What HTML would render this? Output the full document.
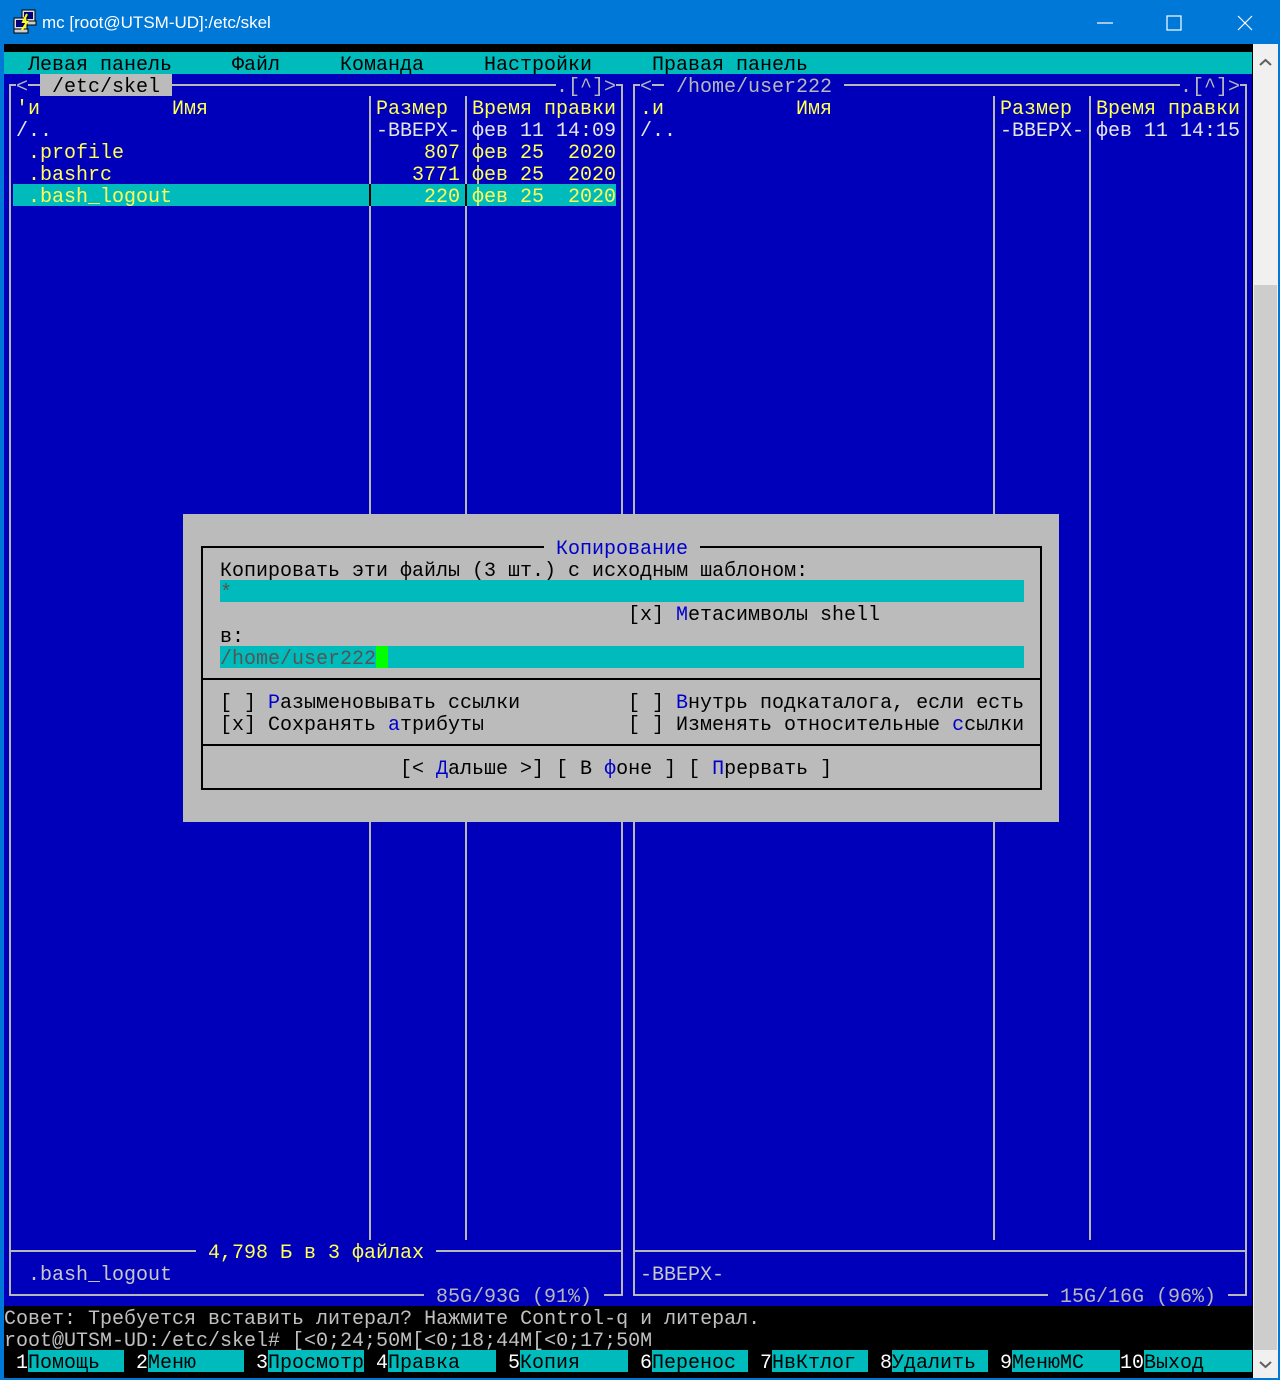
<!DOCTYPE html>
<html><head><meta charset="utf-8"><style>
*{margin:0;padding:0}
body{width:1280px;height:1380px;position:relative;overflow:hidden;background:#000;font-family:"Liberation Mono",monospace;font-size:20px}
.t{position:absolute;height:22px;line-height:27px;white-space:pre;overflow:hidden}
.b{position:absolute}
.hl{position:absolute;height:2px;background:#b8b8b8}
.vl{position:absolute;width:2px;background:#b8b8b8}
.dh{position:absolute;height:2px;background:#000}
.dv{position:absolute;width:2px;background:#000}
.w{color:#e6e6e6}.y{color:#ffff55}.k{color:#000}.bl{color:#0000cc}
</style></head><body>
<div class="b" style="left:0;top:0;width:1280px;height:44px;background:#0078d7"></div>
<div class="b" style="left:0;top:44px;width:4px;height:1336px;background:#0078d7"></div>
<div class="b" style="left:1278px;top:44px;width:2px;height:1336px;background:#0078d7"></div>
<div class="b" style="left:0;top:1378px;width:1280px;height:2px;background:#0078d7"></div>
<svg class="b" style="left:12px;top:9px" width="26" height="26" viewBox="0 0 26 26">
<rect x="10" y="1" width="13" height="11" fill="#ddd" stroke="#000"/><rect x="12" y="3" width="9" height="7" fill="#00007a"/>
<rect x="10" y="12" width="14" height="4" fill="#ccc" stroke="#000"/>
<rect x="2" y="9" width="13" height="11" fill="#ddd" stroke="#000"/><rect x="4" y="11" width="9" height="7" fill="#00007a"/>
<rect x="2" y="20" width="14" height="4" fill="#ccc" stroke="#000"/>
<path d="M15 5 L11 13 L15 13 L10 21" stroke="#ff0" stroke-width="2" fill="none"/></svg>
<div class="b" style="left:42px;top:12px;color:#fff;font-family:'Liberation Sans',sans-serif;font-size:17px;line-height:22px">mc [root@UTSM-UD]:/etc/skel</div>
<svg class="b" style="left:1090px;top:10px" width="170" height="26" viewBox="0 0 170 26">
<path d="M7 13 H23" stroke="#fff" stroke-width="1.2"/>
<rect x="77" y="6" width="14" height="14" fill="none" stroke="#fff" stroke-width="1.2"/>
<path d="M148 6 L162 20 M162 6 L148 20" stroke="#fff" stroke-width="1.2"/></svg>
<div class="b" style="left:1253px;top:44px;width:25px;height:1334px;background:#f0f0f0"></div>
<div class="b" style="left:1254px;top:285px;width:23px;height:1065px;background:#cdcdcd"></div>
<svg class="b" style="left:1253px;top:52px" width="25" height="20"><path d="M7 13 L12.5 8 L18 13" stroke="#606060" stroke-width="2" fill="none"/></svg>
<svg class="b" style="left:1253px;top:1355px" width="25" height="20"><path d="M7 7 L12.5 12 L18 7" stroke="#606060" stroke-width="2" fill="none"/></svg>
<div class="b" style="left:4px;top:52px;width:1248px;height:22px;background:#00bbbb"></div>
<div class="b" style="left:4px;top:74px;width:1248px;height:1232px;background:#0000bb"></div>
<div class="t k" style="left:28px;top:52px">Левая панель</div>
<div class="t k" style="left:232px;top:52px">Файл</div>
<div class="t k" style="left:340px;top:52px">Команда</div>
<div class="t k" style="left:484px;top:52px">Настройки</div>
<div class="t k" style="left:652px;top:52px">Правая панель</div>
<div class="hl" style="left:9px;top:84px;width:614px"></div>
<div class="vl" style="left:9px;top:84px;height:1212px"></div>
<div class="vl" style="left:621px;top:84px;height:1212px"></div>
<div class="hl" style="left:9px;top:1250px;width:614px"></div>
<div class="hl" style="left:9px;top:1294px;width:614px"></div>
<div class="vl" style="left:369px;top:96px;height:1144px"></div>
<div class="vl" style="left:465px;top:96px;height:1144px"></div>
<div class="hl" style="left:633px;top:84px;width:614px"></div>
<div class="vl" style="left:633px;top:84px;height:1212px"></div>
<div class="vl" style="left:1245px;top:84px;height:1212px"></div>
<div class="hl" style="left:633px;top:1250px;width:614px"></div>
<div class="hl" style="left:633px;top:1294px;width:614px"></div>
<div class="vl" style="left:993px;top:96px;height:1144px"></div>
<div class="vl" style="left:1089px;top:96px;height:1144px"></div>
<div class="t" style="left:16px;top:74px;background:#0000bb;color:#b8b8b8">&lt;</div>
<div class="t k" style="left:40px;top:74px;background:#bbbbbb"> /etc/skel </div>
<div class="t" style="left:556px;top:74px;background:#0000bb;color:#b8b8b8">.[^]&gt;</div>
<div class="t" style="left:640px;top:74px;background:#0000bb;color:#b8b8b8">&lt;</div>
<div class="t" style="left:664px;top:74px;background:#0000bb;color:#b8b8b8"> /home/user222 </div>
<div class="t" style="left:1180px;top:74px;background:#0000bb;color:#b8b8b8">.[^]&gt;</div>
<div class="t y" style="left:16px;top:96px">'и</div>
<div class="t y" style="left:172px;top:96px">Имя</div>
<div class="t y" style="left:376px;top:96px">Размер</div>
<div class="t y" style="left:472px;top:96px">Время правки</div>
<div class="t y" style="left:640px;top:96px">.и</div>
<div class="t y" style="left:796px;top:96px">Имя</div>
<div class="t y" style="left:1000px;top:96px">Размер</div>
<div class="t y" style="left:1096px;top:96px">Время правки</div>
<div class="t w" style="left:16px;top:118px">/..</div>
<div class="t w" style="left:376px;top:118px">-ВВЕРХ-</div>
<div class="t w" style="left:472px;top:118px">фев 11 14:09</div>
<div class="t y" style="left:28px;top:140px">.profile</div>
<div class="t y" style="left:424px;top:140px">807</div>
<div class="t y" style="left:472px;top:140px">фев 25  2020</div>
<div class="t y" style="left:28px;top:162px">.bashrc</div>
<div class="t y" style="left:412px;top:162px">3771</div>
<div class="t y" style="left:472px;top:162px">фев 25  2020</div>
<div class="b" style="left:13px;top:184px;width:603px;height:22px;background:#00bbbb"></div>
<div class="b" style="left:369px;top:184px;width:2px;height:22px;background:#000"></div>
<div class="b" style="left:465px;top:184px;width:2px;height:22px;background:#000"></div>
<div class="t y" style="left:28px;top:184px">.bash_logout</div>
<div class="t y" style="left:424px;top:184px">220</div>
<div class="t y" style="left:472px;top:184px">фев 25  2020</div>
<div class="t w" style="left:640px;top:118px">/..</div>
<div class="t w" style="left:1000px;top:118px">-ВВЕРХ-</div>
<div class="t w" style="left:1096px;top:118px">фев 11 14:15</div>
<div class="t y" style="left:196px;top:1240px;background:#0000bb"> 4,798 Б в 3 файлах </div>
<div class="t w" style="left:28px;top:1262px;color:#c8c8c8">.bash_logout</div>
<div class="t" style="left:640px;top:1262px;color:#c8c8c8">-ВВЕРХ-</div>
<div class="t" style="left:424px;top:1284px;background:#0000bb;color:#b8b8b8"> 85G/93G (91%) </div>
<div class="t" style="left:1048px;top:1284px;background:#0000bb;color:#b8b8b8"> 15G/16G (96%) </div>
<div class="b" style="left:183px;top:514px;width:876px;height:308px;background:#bbbbbb"></div>
<div class="dh" style="left:201px;top:546px;width:841px"></div>
<div class="dh" style="left:201px;top:678px;width:841px"></div>
<div class="dh" style="left:201px;top:744px;width:841px"></div>
<div class="dh" style="left:201px;top:788px;width:841px"></div>
<div class="dv" style="left:201px;top:546px;height:244px"></div>
<div class="dv" style="left:1040px;top:546px;height:244px"></div>
<div class="t bl" style="left:544px;top:536px;background:#bbbbbb"> Копирование </div>
<div class="t k" style="left:220px;top:558px">Копировать эти файлы (3 шт.) с исходным шаблоном:</div>
<div class="b" style="left:220px;top:580px;width:804px;height:22px;background:#00bbbb"></div>
<div class="t" style="left:220px;top:580px;color:#555">*</div>
<div class="t k" style="left:628px;top:602px">[x] <span class="bl">М</span>етасимволы shell</div>
<div class="t k" style="left:220px;top:624px">в:</div>
<div class="b" style="left:220px;top:646px;width:804px;height:22px;background:#00bbbb"></div>
<div class="t" style="left:220px;top:646px;color:#555">/home/user222</div>
<div class="b" style="left:376px;top:646px;width:12px;height:22px;background:#00ff00"></div>
<div class="t k" style="left:220px;top:690px">[ ] <span class="bl">Р</span>азыменовывать ссылки</div>
<div class="t k" style="left:628px;top:690px">[ ] <span class="bl">В</span>нутрь подкаталога, если есть</div>
<div class="t k" style="left:220px;top:712px">[x] Сохранять <span class="bl">а</span>трибуты</div>
<div class="t k" style="left:628px;top:712px">[ ] Изменять относительные <span class="bl">с</span>сылки</div>
<div class="t k" style="left:400px;top:756px">[&lt; <span class="bl">Д</span>альше &gt;] [ В <span class="bl">ф</span>оне ] [ <span class="bl">П</span>рервать ]</div>
<div class="t" style="left:4px;top:1306px;color:#c0c0c0">Совет: Требуется вставить литерал? Нажмите Control-q и литерал.</div>
<div class="t" style="left:4px;top:1328px;color:#c0c0c0">root@UTSM-UD:/etc/skel# [&lt;0;24;50M[&lt;0;18;44M[&lt;0;17;50M</div>
<div class="t" style="left:16px;top:1350px;color:#fff">1</div><div class="t k" style="left:28px;top:1350px;width:96px;background:#00bbbb">Помощь</div>
<div class="t" style="left:136px;top:1350px;color:#fff">2</div><div class="t k" style="left:148px;top:1350px;width:96px;background:#00bbbb">Меню</div>
<div class="t" style="left:256px;top:1350px;color:#fff">3</div><div class="t k" style="left:268px;top:1350px;width:96px;background:#00bbbb">Просмотр</div>
<div class="t" style="left:376px;top:1350px;color:#fff">4</div><div class="t k" style="left:388px;top:1350px;width:108px;background:#00bbbb">Правка</div>
<div class="t" style="left:508px;top:1350px;color:#fff">5</div><div class="t k" style="left:520px;top:1350px;width:108px;background:#00bbbb">Копия</div>
<div class="t" style="left:640px;top:1350px;color:#fff">6</div><div class="t k" style="left:652px;top:1350px;width:96px;background:#00bbbb">Перенос</div>
<div class="t" style="left:760px;top:1350px;color:#fff">7</div><div class="t k" style="left:772px;top:1350px;width:96px;background:#00bbbb">НвКтлог</div>
<div class="t" style="left:880px;top:1350px;color:#fff">8</div><div class="t k" style="left:892px;top:1350px;width:96px;background:#00bbbb">Удалить</div>
<div class="t" style="left:1000px;top:1350px;color:#fff">9</div><div class="t k" style="left:1012px;top:1350px;width:108px;background:#00bbbb">МенюMC</div>
<div class="t" style="left:1120px;top:1350px;color:#fff">10</div><div class="t k" style="left:1144px;top:1350px;width:108px;background:#00bbbb">Выход</div>
</body></html>
